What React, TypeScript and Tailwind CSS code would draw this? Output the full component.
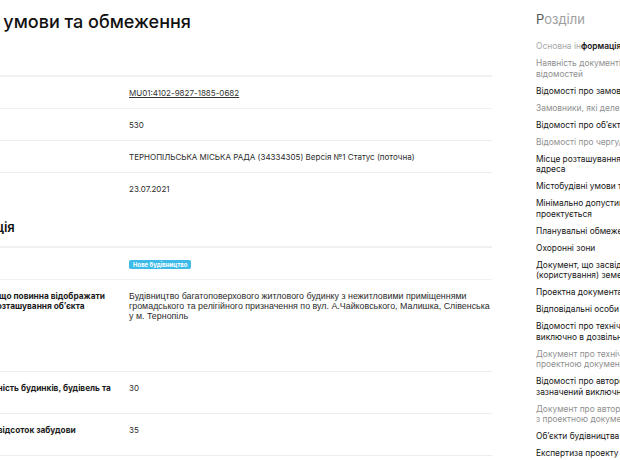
const sections = [
  { text: ['Основна ін', 'формація'], muted: 'split' },
  { text: ['Наявність документів, що засвідчують', 'відомостей'], muted: true },
  { text: ['Відомості про замовника'] },
  { text: ['Замовники, які делегували повноваження'], muted: true },
  { text: ['Відомості про об’єкт'] },
  { text: ['Відомості про чергу/пусковий комплекс'], muted: true },
  { text: ['Місце розташування об’єкта /', 'адреса'] },
  { text: ['Містобудівні умови та обмеження'] },
  { text: ['Мінімально допустимі відстані від об’єкта, що', 'проектується'] },
  { text: ['Планувальні обмеження'] },
  { text: ['Охоронні зони'] },
  { text: ['Документ, що засвідчує право власності', '(користування) земельною ділянкою'] },
  { text: ['Проектна документація'] },
  { text: ['Відповідальні особи'] },
  { text: ['Відомості про технічний нагляд, зазначений', 'виключно в дозвільних документах'] },
  { text: ['Документ про технічний нагляд, згідно з', 'проектною документацією'], muted: true },
  { text: ['Відомості про авторський нагляд,', 'зазначений виключно в документах'] },
  { text: ['Документ про авторський нагляд, згідно', 'з проектною документацією'], muted: true },
  { text: ['Об’єкти будівництва'] },
  { text: ['Експертиза проекту'] },
];

function Row({
  label,
  children,
  first,
  last,
  className = '',
}: {
  label: string[];
  children: React.ReactNode;
  first?: boolean;
  last?: boolean;
  className?: string;
}) {
  return (
    <div
      className={`flex py-[10.5px] ${first ? 'border-t-2 border-[#f1f1f1]' : ''} ${
        last ? '' : 'border-b border-[#eceeee]'
      } ${className}`}
    >
      <div className="w-[256px] shrink-0 pl-[10px] pr-4 text-[8.3px] leading-[10px] font-bold text-[#1b1b1b]">
        {label.map((l) => (
          <div key={l} className="whitespace-nowrap">
            {l}
          </div>
        ))}
      </div>
      <div className="flex-1 text-[8px] leading-[10px] text-[#2b2b2b]">{children}</div>
    </div>
  );
}

export default function App() {
  return (
    <div className="w-[620px] h-[460px] overflow-hidden bg-white flex font-['Inter',sans-serif]">
      {/* основний блок, зсунутий ліворуч як на скріні */}
      <div className="-ml-[127px] w-[619px] shrink-0">
        <h1 className="pl-[13px] pt-[10px] text-[18px] leading-[24px] font-medium text-[#111] whitespace-nowrap">
          Містобудівні умови та обмеження
        </h1>

        <div className="mt-[41px]">
          <Row label={['Ідентифікатор']} first>
            <span className="underline text-[#333]">MU01:4102-9827-1885-0682</span>
          </Row>
          <Row label={['Номер']}>530</Row>
          <Row label={['Орган']}>ТЕРНОПІЛЬСЬКА МІСЬКА РАДА (34334305) Версія №1 Статус (поточна)</Row>
          <Row label={['Дата видачі']} last>
            23.07.2021
          </Row>
        </div>

        <h2 className="pl-[8px] mt-[13px] text-[13px] leading-[20px] font-semibold text-[#111] whitespace-nowrap">
          Основна інформація
        </h2>

        <div className="mt-[9px]">
          <Row label={['Вид']} first>
            <span className="inline-block rounded-[2px] bg-[#3cbbe8] px-[4px] text-[6px] leading-[9px] font-bold text-white">
              Нове будівництво
            </span>
          </Row>
          <Row
            label={['Назва об’єкта будівництва, що повинна відображати', 'вид будівництва та місце розташування об’єкта']}
            className="min-h-[92px]"
          >
            <div className="font-['Liberation_Sans',sans-serif] text-[8.9px]">
              Будівництво багатоповерхового житлового будинку з нежитловими приміщеннями громадського
              та релігійного призначення по вул. А.Чайковського, Малишка, Слівенська у м. Тернопіль
            </div>
          </Row>
          <Row label={['Гранично допустима висотність будинків, будівель та', 'споруд']}>30</Row>
          <Row label={['Максимально допустимий відсоток забудови', 'ділянки']}>35</Row>
        </div>
      </div>

      {/* навігація по розділах */}
      <nav className="ml-[44px] shrink-0 w-[240px]">
        <div className="pt-[10px] text-[13px] leading-[18px] text-[#a0a0a0]">
          <span className="text-[#555]">Р</span>озділи
        </div>
        <ul className="mt-[13px] flex flex-col gap-[6.5px] text-[8.4px] leading-[10.5px]">
          {sections.map((s, i) => (
            <li key={i} className={s.muted === true ? 'text-[#8f8f8f]' : 'text-[#151515]'}>
              {s.muted === 'split' ? (
                <div className="whitespace-nowrap">
                  <span className="text-[#a8a8a8]">{s.text[0]}</span>
                  <span className="font-semibold">{s.text[1]}</span>
                </div>
              ) : (
                s.text.map((t) => (
                  <div key={t} className="whitespace-nowrap">
                    {t}
                  </div>
                ))
              )}
            </li>
          ))}
        </ul>
      </nav>
    </div>
  );
}
